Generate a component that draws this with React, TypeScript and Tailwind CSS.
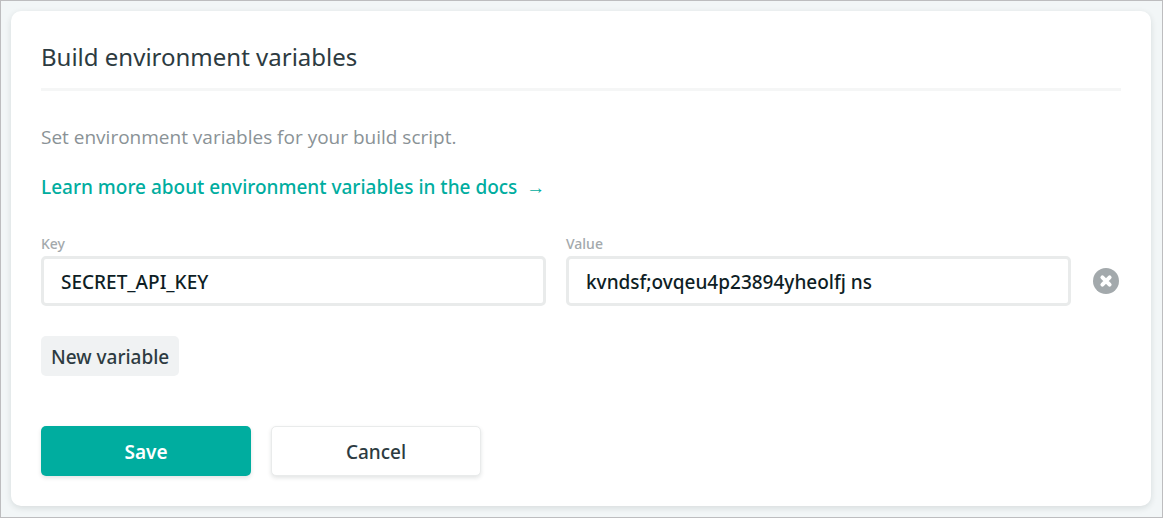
import { useState } from "react";

type Variable = { id: number; key: string; value: string };

const inputClass =
  "block h-[50px] w-full rounded-[5px] border-3 border-[#e9ebeb] bg-white px-[17px] pt-[2px] text-[19px] font-medium text-[#0e1e25] outline-none focus:border-[#00ad9f]";

const labelClass = "block text-sm leading-6 font-medium text-[#a3a9ac]";

export default function App() {
  const [variables, setVariables] = useState<Variable[]>([
    { id: 1, key: "SECRET_API_KEY", value: "kvndsf;ovqeu4p23894yheolfj ns" },
  ]);

  const update = (id: number, field: "key" | "value", text: string) =>
    setVariables((list) => list.map((v) => (v.id === id ? { ...v, [field]: text } : v)));

  return (
    <main className="min-h-screen border border-[#bdbdbf] bg-[#f2f6f7] p-[10px] pr-[11px] font-['Noto_Sans','Open_Sans',sans-serif] text-[#2d3b41]">
      <section className="rounded-[10px] bg-white p-[30px] shadow-[0_2px_6px_rgba(14,30,37,0.12)]">
        <h2 className="border-b-3 border-[#f5f6f6] pb-[15px] text-2xl leading-8 font-normal">
          Build environment variables
        </h2>
        <p className="mt-[30px] font-['Open_Sans','Noto_Sans',sans-serif] text-[19px] leading-8 font-normal text-[#8a9296]">
          Set environment variables for your build script.
        </p>
        <p className="mt-[18px] text-[19px] leading-8">
          <a href="#docs" className="font-medium text-[#00ad9f]">
            Learn more about environment variables in the docs <span className="ml-1">→</span>
          </a>
        </p>

        <form className="mt-[29px]" onSubmit={(e) => e.preventDefault()}>
          {variables.map((v) => (
            <div key={v.id} className="mb-[30px] flex items-end">
              <div className="mr-5 flex-1">
                <label htmlFor={`key-${v.id}`} className={labelClass}>
                  Key
                </label>
                <input
                  id={`key-${v.id}`}
                  className={inputClass}
                  value={v.key}
                  onChange={(e) => update(v.id, "key", e.target.value)}
                />
              </div>
              <div className="flex-1">
                <label htmlFor={`value-${v.id}`} className={labelClass}>
                  Value
                </label>
                <input
                  id={`value-${v.id}`}
                  className={inputClass}
                  value={v.value}
                  onChange={(e) => update(v.id, "value", e.target.value)}
                />
              </div>
              <button
                type="button"
                aria-label="Remove variable"
                onClick={() => setVariables((list) => list.filter((x) => x.id !== v.id))}
                className="flex h-[50px] w-[50px] items-center justify-end pr-[2px]"
              >
                <svg width="26" height="26" viewBox="0 0 26 26" aria-hidden="true">
                  <circle cx="13" cy="13" r="13" fill="#a3a9ac" />
                  <path
                    d="M9.4 9.4l7.2 7.2M16.6 9.4l-7.2 7.2"
                    stroke="#fff"
                    strokeWidth="4"
                    strokeLinecap="round"
                  />
                </svg>
              </button>
            </div>
          ))}

          <button
            type="button"
            onClick={() => setVariables((list) => [...list, { id: Date.now(), key: "", value: "" }])}
            className="block h-10 rounded-[5px] bg-[#f0f2f3] px-[10px] pt-[2px] text-[19px] font-medium"
          >
            New variable
          </button>

          <div className="mt-[50px] flex gap-5">
            <button
              type="submit"
              className="h-[50px] w-[210px] rounded-[5px] bg-[#00ad9f] pt-[2px] text-[19px] font-semibold text-white shadow-[0_2px_4px_rgba(14,30,37,0.12)]"
            >
              Save
            </button>
            <button
              type="button"
              className="h-[50px] w-[210px] rounded-[5px] border border-[#e9ebeb] bg-white pt-[2px] text-[19px] font-medium shadow-[0_2px_4px_rgba(14,30,37,0.12)]"
            >
              Cancel
            </button>
          </div>
        </form>
      </section>
    </main>
  );
}
